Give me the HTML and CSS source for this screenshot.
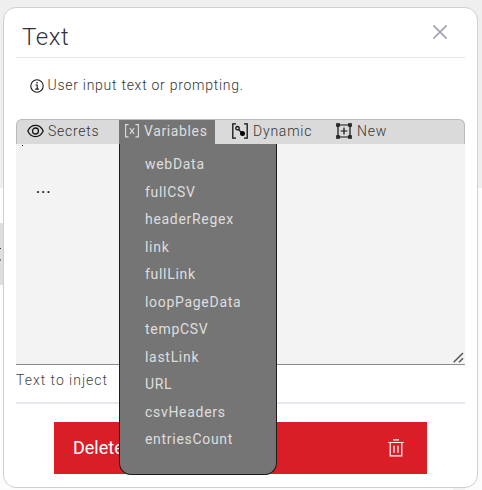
FILE: index.html
```html
<!DOCTYPE html>
<html lang="en">
<head>
<meta charset="utf-8">
<title>Text</title>
<link rel="stylesheet" href="styles.css">
</head>
<body>
<div class="handle"><svg width="1" height="14" viewBox="0 0 1 14"><path d="M0 0h1v1H0z" fill="#333"/><path d="M0 11h1v2H0z" fill="#888"/></svg></div>
<div class="corner"></div>
<main class="card">
  <header class="head">
    <h1>Text</h1>
    <svg class="close" width="14" height="14" viewBox="0 0 14 14"><path d="M.5.5l13 13M13.5.5l-13 13" fill="none" stroke="#a3a2b2" stroke-width="1.7"/></svg>
  </header>
  <p class="info">
    <svg width="14" height="14" viewBox="0 0 14 14"><circle cx="7" cy="7" r="6.2" fill="none" stroke="#161616" stroke-width="1.1"/><path d="M5.5 6h1.7v4M5.2 10.1h3.7" fill="none" stroke="#161616" stroke-width="1.1"/><circle cx="7" cy="3.8" r=".8" fill="#161616"/></svg>
    <span>User input text or prompting.</span>
  </p>
  <nav class="tools">
    <div class="tool secrets">
      <svg width="17" height="14" viewBox="0 0 17 14"><path d="M.8 7C2.5 3.300 5.200 1.400 8.500 1.400S14.500 3.300 16.200 7C14.500 10.700 11.800 12.600 8.500 12.600S2.500 10.700.8 7z" fill="none" stroke="#161616" stroke-width="1.300"/><circle cx="8.500" cy="7" r="3" fill="none" stroke="#161616" stroke-width="1.300"/></svg>
      <span>Secrets</span>
    </div>
    <div class="tool variables">
      <svg width="14" height="14" viewBox="0 0 14 14" fill="none" stroke="#dedede" stroke-width="1.100"><path d="M3.500.6H.6v12.300h2.900M10.500.6h2.900v12.300h-2.900M4.800 4l4.400 5.800M9.200 4L4.800 9.800"/></svg>
      <span>Variables</span>
      <ul class="menu">
        <li>webData</li><li>fullCSV</li><li>headerRegex</li><li>link</li><li>fullLink</li><li>loopPageData</li><li>tempCSV</li><li>lastLink</li><li>URL</li><li>csvHeaders</li><li>entriesCount</li>
      </ul>
    </div>
    <div class="tool dynamic">
      <svg width="16" height="16" viewBox="0 0 16 16" fill="none" stroke="#111" stroke-width="1.300"><path d="M4 .8H.8v14.400H4M12 .8h3.200v14.400H12M6.500 6.500l3 3"/><circle cx="5.500" cy="5.200" r="1.700"/><circle cx="10.500" cy="10.500" r="2.500" fill="#000" stroke="none"/></svg>
      <span>Dynamic</span>
    </div>
    <div class="tool new">
      <svg width="16" height="16" viewBox="0 0 16 16" fill="none" stroke="#111" stroke-width="1.200"><path d="M3 2h10M3 14h10M2 3v10M14 3v10M8 4.600v6.800M4.600 8h6.800"/><path d="M.8.800h2.400v2.400H.8zM12.800.8h2.400v2.400h-2.400zM.8 12.800h2.400v2.400H.8zM12.800 12.800h2.400v2.400h-2.400z" fill="#777"/></svg>
      <span>New</span>
    </div>
  </nav>
  <section class="field">
    <i class="tick"></i>
    <span>...</span>
    <svg class="grip" width="11" height="11" viewBox="0 0 11 11"><path d="M.7 10.300L10 1M6 10.300L10 6.300" stroke="#555" stroke-width="1.500"/></svg>
  </section>
  <p class="label">Text to inject</p>
  <hr>
  <button class="delete"><span>Delete</span>
    <svg width="16" height="18" viewBox="0 0 16 18" fill="none" stroke="#fff" stroke-width="1.200"><path d="M5 .9h6M.3 3.500h15.400M2.200 3.500v13.300h11.600V3.500M6 6.700v7M10 6.700v7"/></svg>
  </button>
</main>
</body>
</html>
```
FILE: styles.css
```css
* { box-sizing: border-box; }
body {
  margin: 0;
  height: 490px;
  padding: 7px 4px 2px 3px;
  overflow: hidden;
  position: relative;
  font: 300 14px/18px Roboto, "Liberation Sans", sans-serif;
  color: #333;
  background: linear-gradient(#efefef 188px, #fcfcfc 188px);
}
.handle { position: absolute; left: 0; top: 223px; width: 8px; height: 62px; padding-top: 25px; background: #dedede; }
.handle svg { display: block; }
.corner { position: absolute; left: 453px; top: 480px; width: 12px; height: 10px; background: #f2f2f2; }
.card { position: relative; width: 475px; height: 481px; border: 1px solid #cfcfcf; border-radius: 13px; background: #fff; padding: 0 12px; }
.head { height: 50px; border-bottom: 1px solid #e5e5e5; display: flex; justify-content: space-between; padding: 17px 18px 0 6px; }
h1 { margin: 0; font-size: 24px; line-height: 24px; font-weight: 300; letter-spacing: .6px; color: #32323c; }
.info { margin: 0; padding: 18px 0 0 14px; height: 61px; display: flex; gap: 3.500px; }
.info svg { margin-top: 3px; }
.info span { letter-spacing: .73px; }
.tools { height: 25px; display: flex; background: #dadada; border: 1px solid #bababa; border-bottom: 0; border-radius: 6px 6px 0 0; }
.tool { position: relative; display: flex; align-items: center; height: 24px; padding-bottom: 2px; white-space: nowrap; }
.secrets { width: 102px; padding-left: 10px; gap: 4px; letter-spacing: .75px; }
.variables { width: 96px; padding-left: 6px; gap: 5px; background: #757575; color: #dedede; font-weight: 400; letter-spacing: .62px; }
.dynamic { width: 104px; padding-left: 17px; gap: 5px; letter-spacing: .78px; }
.new { padding-left: 17px; gap: 5px; letter-spacing: .75px; }
.menu { position: absolute; left: 0; top: 24px; width: 158px; height: 331px; margin: 0; padding: 7px 25px; list-style: none; background: #757575; border: 1px solid #1c1c1c; border-top: 0; border-radius: 0 0 12px 12px; z-index: 2; letter-spacing: .7px; }
.menu li { height: 27.5px; line-height: 27.5px; }
.field { position: relative; height: 221px; background: #f3f3f3; border-bottom: 1px solid #8b8b8b; padding: 35px 20px; font-weight: 500; letter-spacing: 1.300px; color: #161616; }
.tick { position: absolute; left: 6px; top: 1px; width: 1px; height: 1px; background: #161616; }
.grip { position: absolute; right: 1px; bottom: 1px; }
.label { margin: 0; height: 37px; padding-top: 6px; letter-spacing: .98px; color: #444; }
hr { margin: 0; height: 2px; border: 0; background: #e7e7ef; }
.delete { display: flex; justify-content: space-between; align-items: center; width: 373px; height: 52px; margin: 18px 0 0 38px; padding: 0 23px 0 19px; border: 0; background: #da1e28; color: #fff; font: 400 18px/24px Roboto, "Liberation Sans", sans-serif; }
```
